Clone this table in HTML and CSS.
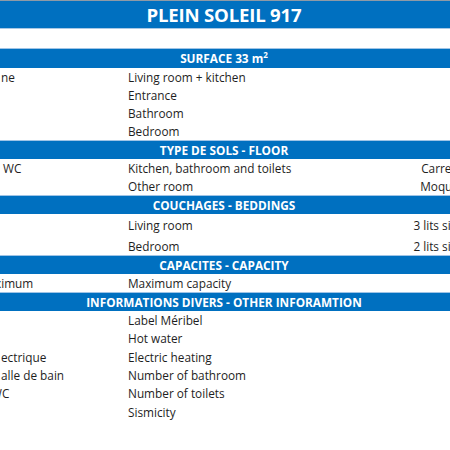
FILE: index.html
```html
<!DOCTYPE html>
<html lang="fr">
<head>
<meta charset="utf-8">
<title>Plein Soleil 917</title>
<link rel="stylesheet" href="styles.css">
</head>
<body>
<div class="sheet">
  <div class="title">PLEIN SOLEIL 917</div>
  <div class="spacer"></div>

  <div class="band band-first">SURFACE 33 m<sup>2</sup></div>
  <div class="row"><span class="a">ne</span><span class="b">Living room + kitchen</span><span class="c"></span></div>
  <div class="row"><span class="a"></span><span class="b">Entrance</span><span class="c"></span></div>
  <div class="row"><span class="a"></span><span class="b">Bathroom</span><span class="c"></span></div>
  <div class="row"><span class="a"></span><span class="b">Bedroom</span><span class="c"></span></div>

  <div class="band">TYPE DE SOLS - FLOOR</div>
  <div class="row"><span class="a a-in3">WC</span><span class="b">Kitchen, bathroom and toilets</span><span class="c">Carrelage</span></div>
  <div class="row"><span class="a"></span><span class="b">Other room</span><span class="c">Moquette</span></div>

  <div class="band">COUCHAGES - BEDDINGS</div>
  <div class="row row-tall"><span class="a"></span><span class="b">Living room</span><span class="c c-bed">3 lits simples</span></div>
  <div class="row row-mid"><span class="a"></span><span class="b">Bedroom</span><span class="c c-bed">2 lits simples</span></div>

  <div class="band">CAPACITES - CAPACITY</div>
  <div class="row"><span class="a a-cut">ximum</span><span class="b">Maximum capacity</span><span class="c"></span></div>

  <div class="band">INFORMATIONS DIVERS - OTHER INFORAMTION</div>
  <div class="row row-info"><span class="a"></span><span class="b">Label Méribel</span><span class="c"></span></div>
  <div class="row row-info"><span class="a"></span><span class="b">Hot water</span><span class="c"></span></div>
  <div class="row row-info"><span class="a">ectrique</span><span class="b">Electric heating</span><span class="c"></span></div>
  <div class="row row-info"><span class="a">alle de bain</span><span class="b">Number of bathroom</span><span class="c"></span></div>
  <div class="row row-info"><span class="a a-cutw">WC</span><span class="b">Number of toilets</span><span class="c"></span></div>
  <div class="row row-info"><span class="a"></span><span class="b">Sismicity</span><span class="c"></span></div>
</div>
</body>
</html>
```

FILE: styles.css
```css
html, body {
  margin: 0;
  padding: 0;
  background: #ffffff;
  overflow: hidden;
}

body {
  width: 450px;
  height: 450px;
  font-family: "Open Sans", "Noto Sans", sans-serif;
  color: #1e1e1e;
}

.sheet {
  width: 474px;
  border-top: 1px solid #8f9aa6;
}

.title {
  height: 28px;
  background: #0070c0;
  color: #ffffff;
  font-weight: 700;
  font-size: 18.6px;
  line-height: 28px;
  text-align: center;
  padding-right: 26px;
  border-bottom: 1px solid #a9c8e4;
  box-sizing: border-box;
  letter-spacing: -0.2px;
}

.spacer {
  height: 19px;
}

.band {
  height: 19px;
  box-sizing: border-box;
  background: #0070c0;
  border-top: 1px solid #9fc4e6;
  color: #ffffff;
  font-weight: 700;
  font-size: 11.8px;
  line-height: 18px;
  text-align: center;
  padding-right: 26px;
  white-space: nowrap;
}

.band-first {
  height: 20px;
  line-height: 19px;
}

.band sup {
  font-size: 8px;
  line-height: 0;
  vertical-align: 5px;
}

.row {
  display: grid;
  grid-template-columns: 128px 240px 1fr;
  height: 18px;
  align-items: center;
  font-size: 11.8px;
  line-height: 18px;
  white-space: nowrap;
}

.row-tall {
  height: 22px;
}

.row-mid {
  height: 19px;
}

.row-info {
  height: 18.3px;
}

.a {
  overflow: hidden;
  padding-left: 1px;
}

.a-in3 {
  padding-left: 3px;
}

.a-cut {
  padding-left: 0;
  text-indent: -5px;
}

.a-cutw {
  padding-left: 0;
  text-indent: -9px;
}

.b {
  overflow: hidden;
}

.c {
  text-align: right;
}

.c-bed {
  padding-right: 0;
  margin-right: -10px;
}
```
